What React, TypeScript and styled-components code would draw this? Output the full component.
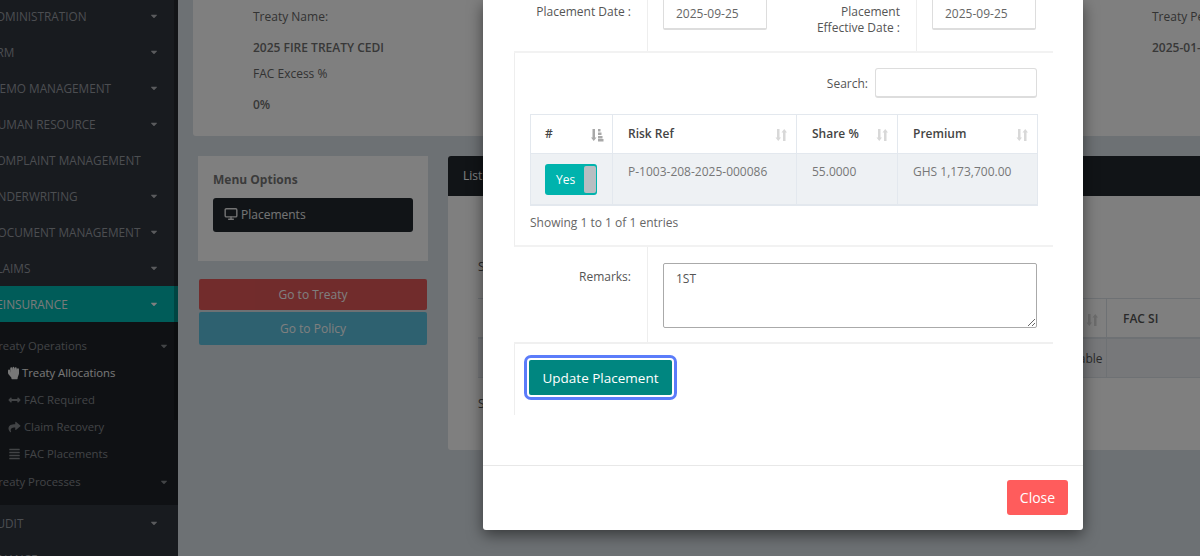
import { createGlobalStyle } from 'styled-components';
import styled from 'styled-components';
import { FaAlignJustify, FaArrowsAltH, FaCaretDown, FaHandRock, FaShare } from 'react-icons/fa';
import { Monitor } from 'lucide-react';

const GlobalStyle = createGlobalStyle`
  html, body {
    margin: 0;
    height: 100%;
    overflow: hidden;
    background: #dbe2e8;
    font-family: "Open Sans", "Noto Sans", sans-serif;
    font-size: 12px;
    color: #555;
  }
  * { box-sizing: border-box; }
`;

const menuTop = ['ADMINISTRATION', 'CRM', 'MEMO MANAGEMENT', 'HUMAN RESOURCE', 'COMPLAINT MANAGEMENT', 'UNDERWRITING', 'DOCUMENT MANAGEMENT', 'CLAIMS'];

const SortPair = () => (
  <SortIcon width="13" height="14" viewBox="0 0 13 14">
    <path d="M2 1h2.500v8.500H6L3.250 13 .5 9.500H2zM10.500 13H8V4.500H6.500L9.250 1 12 4.500h-1.500z" fill="currentColor" />
  </SortIcon>
);

// the active sort column: arrow plus stacked bars
const SortActive = () => (
  <SortIcon $dark width="14" height="14" viewBox="0 0 14 14">
    <path d="M2.500 1H5v8.500h1.500L3.750 13 1 9.500h1.500zM8 1h2.500v2.500H8zM8 4.500h3.500v2.500H8zM8 8h4.500v2.500H8zM8 11h5.500v2.500H8z" fill="currentColor" />
  </SortIcon>
);

const App = () => (
  <Page>
    <GlobalStyle />
    <Sidebar>
      <SideList>
        {menuTop.map((item) => (
          <SideItem key={item}>
            <SideLabel>{item}</SideLabel>
            {item !== 'COMPLAINT MANAGEMENT' && <Caret />}
          </SideItem>
        ))}
        <SideItem $active>
          <SideLabel $active>REINSURANCE</SideLabel>
          <Caret $active />
        </SideItem>
        <SubMenu>
          <SubHead>
            <span>Treaty Operations</span>
            <SubCaret />
          </SubHead>
          <SubItem $current>
            <FistIcon preserveAspectRatio="none" /> Treaty Allocations
          </SubItem>
          <SubItem>
            <FaArrowsAltH /> FAC Required
          </SubItem>
          <SubItem>
            <FaShare /> Claim Recovery
          </SubItem>
          <SubItem>
            <FaAlignJustify /> FAC Placements
          </SubItem>
          <SubHead>
            <span>Treaty Processes</span>
            <SubCaret />
          </SubHead>
        </SubMenu>
        <SideItem>
          <SideLabel>AUDIT</SideLabel>
          <Caret />
        </SideItem>
        <SideItem>
          <SideLabel>FINANCE</SideLabel>
        </SideItem>
      </SideList>
      <ScrollThumb />
    </Sidebar>

    <Main>
      <TopPanel>
        <InfoCol>
          <InfoLabel>Treaty Name:</InfoLabel>
          <InfoValue>2025 FIRE TREATY CEDI</InfoValue>
          <InfoLabel>FAC Excess %</InfoLabel>
          <InfoValue>0%</InfoValue>
        </InfoCol>
        <InfoCol>
          <InfoLabel>Treaty Period:</InfoLabel>
          <InfoValue>2025-01-01</InfoValue>
        </InfoCol>
      </TopPanel>

      <Columns>
        <LeftCol>
          <MenuPanel>
            <MenuTitle>Menu Options</MenuTitle>
            <MenuButton>
              <Monitor size={14} strokeWidth={2.4} /> Placements
            </MenuButton>
          </MenuPanel>
          <GoButton $color="#e45656">Go to Treaty</GoButton>
          <GoButton $color="#5ac2e0" $tall>Go to Policy</GoButton>
        </LeftCol>
        <ListPanel>
          <ListHeader>List of Placements</ListHeader>
          <ListBody>
            <ListNote>Show 10 entries</ListNote>
            <BackTable>
              <BackCell />
              <BackCell />
              <BackCell $head>FAC SI</BackCell>
              <BackCell $row />
              <BackCell $row>Not Applicable</BackCell>
              <BackCell $row />
            </BackTable>
            <ListNote $low>Showing 1 to 1 of 1 entries</ListNote>
          </ListBody>
          <BackSort><SortPair /></BackSort>
        </ListPanel>
      </Columns>
    </Main>

    <Overlay />

    <Modal>
      <ModalBody>
        <DateRow>
          <FieldLabel>Placement Date :</FieldLabel>
          <FieldSlot>
            <DateInput>2025-09-25</DateInput>
          </FieldSlot>
          <FieldLabel>Placement<br />Effective Date :</FieldLabel>
          <FieldSlot>
            <DateInput>2025-09-25</DateInput>
          </FieldSlot>
        </DateRow>

        <TableBlock>
          <SearchRow>
            <span>Search:</span>
            <SearchInput />
          </SearchRow>
          <RiskTable>
            <HeadCell>
              # <SortActive />
            </HeadCell>
            <HeadCell>
              Risk Ref <SortPair />
            </HeadCell>
            <HeadCell>
              Share % <SortPair />
            </HeadCell>
            <HeadCell>
              Premium <SortPair />
            </HeadCell>
            <BodyCell>
              <Toggle>
                <span>Yes</span>
                <ToggleKnob />
              </Toggle>
            </BodyCell>
            <BodyCell>P-1003-208-2025-000086</BodyCell>
            <BodyCell>55.0000</BodyCell>
            <BodyCell>GHS 1,173,700.00</BodyCell>
          </RiskTable>
          <TableInfo>Showing 1 to 1 of 1 entries</TableInfo>
        </TableBlock>

        <RemarksRow>
          <FieldLabel $low>Remarks:</FieldLabel>
          <RemarksSlot>
            <Remarks defaultValue="1ST" />
          </RemarksSlot>
        </RemarksRow>

        <ActionRow>
          <UpdateButton>Update Placement</UpdateButton>
        </ActionRow>
      </ModalBody>
      <ModalFooter>
        <CloseButton>Close</CloseButton>
      </ModalFooter>
    </Modal>
  </Page>
);

const Page = styled.div`
  display: flex;
  width: 1200px;
  height: 556px;
  overflow: hidden;
  position: relative;
`;

const Sidebar = styled.aside`
  width: 178px;
  flex-shrink: 0;
  background: #30363f;
  position: relative;
  overflow: hidden;
`;

const SideList = styled.div`
  margin-top: -2px;
`;

const SideItem = styled.div<{ $active?: boolean }>`
  height: 36px;
  display: flex;
  align-items: center;
  justify-content: space-between;
  padding-right: 19px;
  background: ${(p) => (p.$active ? '#00b8b2' : 'transparent')};
`;

const SideLabel = styled.span<{ $active?: boolean }>`
  margin-left: -11px;
  font-size: 11.800px;
  white-space: nowrap;
  color: ${(p) => (p.$active ? '#f4f4f4' : '#989ca2')};
`;

const Caret = styled(FaCaretDown)<{ $active?: boolean }>`
  font-size: 10px;
  color: ${(p) => (p.$active ? '#fff' : '#b4b7bb')};
`;

const SubMenu = styled.div`
  background: #1e2329;
  padding: 9px 0 9px;
  height: 183px;
`;

const SubHead = styled.div`
  height: 27px;
  display: flex;
  align-items: center;
  justify-content: space-between;
  padding-right: 9px;
  margin: 1px 0 0 -8px;
  color: #85888d;
  font-size: 11.300px;
  white-space: nowrap;
`;

const SubCaret = styled(FaCaretDown)`
  font-size: 10px;
  color: #85888d;
`;

const SubItem = styled.div<{ $current?: boolean }>`
  height: 27px;
  display: flex;
  align-items: center;
  gap: 3px;
  padding-left: 8px;
  color: ${(p) => (p.$current ? '#f0f0f0' : '#85888d')};
  font-size: 11.300px;
  white-space: nowrap;

  svg {
    font-size: 12px;
    width: 13px;
  }
`;

const FistIcon = styled(FaHandRock)`
  && {
    width: 11px;
    height: 14px;
  }
`;

const ScrollThumb = styled.div`
  position: absolute;
  top: 0;
  right: 0;
  width: 4px;
  height: 420px;
  background: rgba(0, 0, 0, 0.25);
`;

const Main = styled.main`
  flex: 1;
  min-width: 0;
  display: flex;
  flex-direction: column;
`;

const TopPanel = styled.section`
  margin-left: 15px;
  height: 136px;
  background: #fff;
  display: flex;
  justify-content: space-between;
  padding-left: 60px;
  border-bottom-left-radius: 3px;
`;

const InfoCol = styled.div`
  display: flex;
  flex-direction: column;
  width: 48px;
  white-space: nowrap;
  padding-top: 8px;

  &:first-child {
    width: 300px;
  }
`;

const InfoLabel = styled.div`
  height: 18px;
  line-height: 18px;
  color: #666;
`;

const InfoValue = styled.div`
  height: 39px;
  padding-top: 13px;
  line-height: 18px;
  font-weight: 600;
  color: #707070;
`;

const Columns = styled.div`
  display: flex;
  gap: 20px;
  padding: 20px 0 0 20px;
`;

const LeftCol = styled.div`
  width: 230px;
  flex-shrink: 0;
`;

const MenuPanel = styled.section`
  height: 105px;
  background: #fff;
  padding: 15px;
  margin-bottom: 18px;
`;

const MenuTitle = styled.div`
  font-weight: 700;
  font-size: 12px;
  line-height: 17px;
  margin-bottom: 10px;
  color: #777;
`;

const MenuButton = styled.div`
  height: 34px;
  background: #22282f;
  border-radius: 3px;
  color: #e8e8e8;
  display: flex;
  align-items: center;
  gap: 3px;
  padding: 0 0 2px 11px;
  width: 200px;
`;

const GoButton = styled.div<{ $color: string; $tall?: boolean }>`
  margin: 0 1px 2px;
  height: ${(p) => (p.$tall ? '33px' : '31px')};
  background: ${(p) => p.$color};
  border-radius: 2px;
  display: flex;
  align-items: center;
  justify-content: center;
  color: #fff;
  opacity: 0.98;
`;

const ListPanel = styled.section`
  flex: 1;
  height: 294px;
  background: #fff;
  border-radius: 3px 0 0 3px;
  position: relative;
`;

const ListHeader = styled.div`
  height: 40px;
  background: #22282f;
  border-radius: 3px 0 0 0;
  color: #fff;
  display: flex;
  align-items: center;
  padding: 0 0 2px 15px;
`;

const ListBody = styled.div`
  padding: 62px 0 0 30px;
`;

const ListNote = styled.div<{ $low?: boolean }>`
  margin-top: ${(p) => (p.$low ? '17px' : '0')};
  line-height: 18px;
`;

const BackTable = styled.div`
  display: grid;
  grid-template-columns: 526px 103px 1fr;
  grid-template-rows: 40px 40px;
  margin-top: 22px;
`;

const BackCell = styled.div<{ $head?: boolean; $row?: boolean }>`
  border: 1px solid #dde3e8;
  border-width: 1px 1px 1px 0;
  background: ${(p) => (p.$row ? '#eef1f4' : '#fff')};
  display: flex;
  align-items: center;
  padding-left: ${(p) => (p.$head ? '16px' : '17px')};
  font-weight: ${(p) => (p.$head ? 600 : 400)};
  white-space: nowrap;

  &:nth-child(3n) {
    border-right: 0;
  }
`;

const BackSort = styled.div`
  position: absolute;
  left: 638px;
  top: 153px;
`;

const Overlay = styled.div`
  position: absolute;
  inset: 0;
  background: rgba(0, 0, 0, 0.5);
`;

const Modal = styled.div`
  position: absolute;
  left: 483px;
  top: 0;
  width: 600px;
  height: 530px;
  background: #fff;
  border-radius: 0 0 3px 3px;
  box-shadow: 0 5px 15px rgba(0, 0, 0, 0.5);
  display: flex;
  flex-direction: column;
  justify-content: flex-end;
  overflow: hidden;
`;

const ModalBody = styled.div`
  padding: 0 30px 50px 31px;
  flex-shrink: 0;
`;

const DateRow = styled.div`
  display: grid;
  grid-template-columns: 134px 134px 135px 1fr;
  height: 60px;
  border-bottom: 2px solid #f2f2f2;
`;

const FieldLabel = styled.div<{ $low?: boolean }>`
  padding: ${(p) => (p.$low ? '22px' : '11px')} 16px 0 0;
  text-align: right;
  line-height: 16px;
  border-right: 1px solid #eee;
  color: #555;
  white-space: nowrap;
`;

const FieldSlot = styled.div`
  padding: 5px 0 0 15px;
`;

const DateInput = styled.div`
  width: 104px;
  height: 32px;
  border: 1px solid #ddd;
  border-bottom-width: 2px;
  border-radius: 2px;
  padding: 0 0 0 12px;
  line-height: 30px;
  color: #666;
`;

const TableBlock = styled.div`
  border-left: 1px solid #eee;
  border-bottom: 2px solid #f2f2f2;
  padding: 15px 16px 0 15px;
  height: 194px;
`;

const SearchRow = styled.div`
  display: flex;
  justify-content: flex-end;
  align-items: center;
  gap: 7px;
  color: #555;
`;

const SearchInput = styled.div`
  width: 162px;
  height: 30px;
  border: 1px solid #ddd;
  border-bottom-width: 2px;
  border-radius: 3px;
`;

const RiskTable = styled.div`
  display: grid;
  grid-template-columns: 82px 184px 101px 140px;
  grid-template-rows: 39px 52px;
  margin-top: 16px;
  width: 508px;
  border-top: 1px solid #e3e8ee;
  border-left: 1px solid #e3e8ee;
`;

const HeadCell = styled.div`
  display: flex;
  align-items: center;
  justify-content: space-between;
  padding: 0 8px 2px 15px;
  font-weight: 600;
  color: #444;
  border-right: 1px solid #e3e8ee;
  border-bottom: 1px solid #e3e8ee;

  &:first-child {
    padding-left: 14px;
  }
`;

const SortIcon = styled.svg<{ $dark?: boolean }>`
  color: ${(p) => (p.$dark ? '#a8a8a8' : '#d8d8d8')};
  margin-top: 4px;
`;

const BodyCell = styled.div`
  background: #eef1f4;
  padding: 10px 15px 0;
  color: #777;
  line-height: 16px;
  border-right: 1px solid #e3e8ee;
  border-bottom: 2px solid #e3e8ee;
  white-space: nowrap;
`;

const Toggle = styled.div`
  width: 52px;
  height: 31px;
  margin-left: -1px;
  background: #00b3ad;
  border-radius: 3px;
  display: flex;
  align-items: center;
  justify-content: space-between;
  padding: 2px 1px 2px 11px;
  color: #fff;
`;

const ToggleKnob = styled.div`
  width: 12px;
  height: 27px;
  background: #b8bec2;
  border-radius: 2px;
`;

const TableInfo = styled.div`
  margin-top: 9px;
  line-height: 16px;
  color: #666;
`;

const RemarksRow = styled.div`
  display: grid;
  grid-template-columns: 134px 1fr;
  height: 97px;
  border-bottom: 2px solid #f0f0f0;
`;

const RemarksSlot = styled.div`
  padding: 16px 0 0 15px;
`;

const Remarks = styled.textarea`
  display: block;
  width: 374px;
  height: 65px;
  border: 1px solid #aaa;
  border-radius: 2px;
  padding: 6px 12px;
  font: inherit;
  color: #555;
  outline: none;
`;

const ActionRow = styled.div`
  border-left: 1px solid #eee;
  height: 71px;
  padding: 16px 0 0 14px;
`;

const UpdateButton = styled.div`
  display: flex;
  align-items: center;
  justify-content: center;
  width: 143px;
  height: 35px;
  background: #008680;
  border-radius: 2px;
  color: #fff;
  font-size: 13.500px;
  outline: 3px solid #5b7cfa;
  outline-offset: 2px;
`;

const ModalFooter = styled.footer`
  height: 65px;
  border-top: 1px solid #e8e8e8;
  display: flex;
  justify-content: flex-end;
  padding: 14px 15px 0 0;
  flex-shrink: 0;
`;

const CloseButton = styled.div`
  width: 61px;
  height: 35px;
  background: #ff5c5c;
  border-radius: 3px;
  color: #fff;
  font-size: 14px;
  display: flex;
  align-items: center;
  justify-content: center;
`;

export default App;
